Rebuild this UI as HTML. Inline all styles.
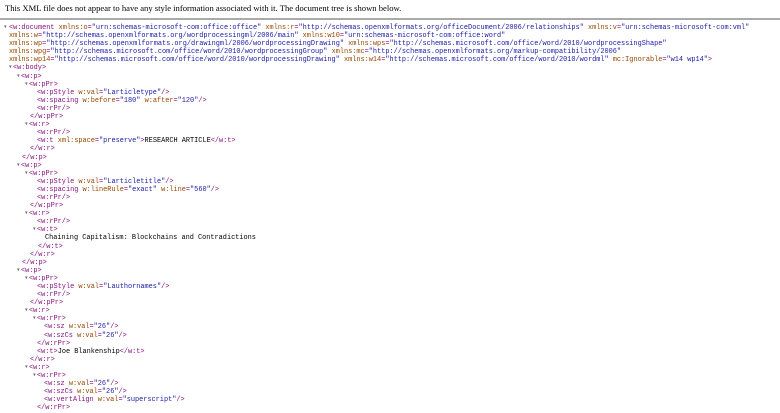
<!DOCTYPE html>
<html><head><meta charset="utf-8"><style>
html,body{margin:0;padding:0;background:#fff;width:780px;height:404px;overflow:hidden}
.hdr{position:absolute;left:5px;top:3px;font-family:"Liberation Serif",serif;font-size:8.6px;color:#000;white-space:nowrap}
.bar{position:absolute;left:0;top:18px;width:780px;height:2px;background:#aaa}
#t{position:absolute;left:0;top:24px;font-family:"Liberation Mono",monospace;font-size:6.9px;line-height:8.1px;color:#000}
.l{position:relative;height:8.1px;white-space:pre}
.t{color:#881280}.a{color:#994500}.v{color:#1a1aa6}
.ar{position:absolute;font-size:4.5px;color:#6e6e6e;top:0}
</style></head><body>
<div class="hdr">This XML file does not appear to have any style information associated with it. The document tree is shown below.</div>
<div class="bar"></div>
<div id="t"><div class="l" style="padding-left:9px"><span class="ar" style="left:4px">▼</span><span class="t">&lt;w:document</span> <span class="a">xmlns:o</span><span class="t">=</span><span class="v">"urn:schemas-microsoft-com:office:office"</span> <span class="a">xmlns:r</span><span class="t">=</span><span class="v">"http://schemas.openxmlformats.org/officeDocument/2006/relationships"</span> <span class="a">xmlns:v</span><span class="t">=</span><span class="v">"urn:schemas-microsoft-com:vml"</span></div><div class="l" style="padding-left:9px"><span class="a">xmlns:w</span><span class="t">=</span><span class="v">"http://schemas.openxmlformats.org/wordprocessingml/2006/main"</span> <span class="a">xmlns:w10</span><span class="t">=</span><span class="v">"urn:schemas-microsoft-com:office:word"</span></div><div class="l" style="padding-left:9px"><span class="a">xmlns:wp</span><span class="t">=</span><span class="v">"http://schemas.openxmlformats.org/drawingml/2006/wordprocessingDrawing"</span> <span class="a">xmlns:wps</span><span class="t">=</span><span class="v">"http://schemas.microsoft.com/office/word/2010/wordprocessingShape"</span></div><div class="l" style="padding-left:9px"><span class="a">xmlns:wpg</span><span class="t">=</span><span class="v">"http://schemas.microsoft.com/office/word/2010/wordprocessingGroup"</span> <span class="a">xmlns:mc</span><span class="t">=</span><span class="v">"http://schemas.openxmlformats.org/markup-compatibility/2006"</span></div><div class="l" style="padding-left:9px"><span class="a">xmlns:wp14</span><span class="t">=</span><span class="v">"http://schemas.microsoft.com/office/word/2010/wordprocessingDrawing"</span> <span class="a">xmlns:w14</span><span class="t">=</span><span class="v">"http://schemas.microsoft.com/office/word/2010/wordml"</span> <span class="a">mc:Ignorable</span><span class="t">=</span><span class="v">"w14 wp14"</span><span class="t">&gt;</span></div><div class="l" style="padding-left:13px"><span class="ar" style="left:9px">▼</span><span class="t">&lt;w:body&gt;</span></div><div class="l" style="padding-left:21px"><span class="ar" style="left:17px">▼</span><span class="t">&lt;w:p&gt;</span></div><div class="l" style="padding-left:29px"><span class="ar" style="left:25px">▼</span><span class="t">&lt;w:pPr&gt;</span></div><div class="l" style="padding-left:37px"><span class="t">&lt;w:pStyle</span> <span class="a">w:val</span><span class="t">=</span><span class="v">"Larticletype"</span><span class="t">/&gt;</span></div><div class="l" style="padding-left:37px"><span class="t">&lt;w:spacing</span> <span class="a">w:before</span><span class="t">=</span><span class="v">"180"</span> <span class="a">w:after</span><span class="t">=</span><span class="v">"120"</span><span class="t">/&gt;</span></div><div class="l" style="padding-left:37px"><span class="t">&lt;w:rPr/&gt;</span></div><div class="l" style="padding-left:30px"><span class="t">&lt;/w:pPr&gt;</span></div><div class="l" style="padding-left:29px"><span class="ar" style="left:25px">▼</span><span class="t">&lt;w:r&gt;</span></div><div class="l" style="padding-left:37px"><span class="t">&lt;w:rPr/&gt;</span></div><div class="l" style="padding-left:37px"><span class="t">&lt;w:t</span> <span class="a">xml:space</span><span class="t">=</span><span class="v">"preserve"</span><span class="t">&gt;</span>RESEARCH ARTICLE<span class="t">&lt;/w:t&gt;</span></div><div class="l" style="padding-left:30px"><span class="t">&lt;/w:r&gt;</span></div><div class="l" style="padding-left:22px"><span class="t">&lt;/w:p&gt;</span></div><div class="l" style="padding-left:21px"><span class="ar" style="left:17px">▼</span><span class="t">&lt;w:p&gt;</span></div><div class="l" style="padding-left:29px"><span class="ar" style="left:25px">▼</span><span class="t">&lt;w:pPr&gt;</span></div><div class="l" style="padding-left:37px"><span class="t">&lt;w:pStyle</span> <span class="a">w:val</span><span class="t">=</span><span class="v">"Larticletitle"</span><span class="t">/&gt;</span></div><div class="l" style="padding-left:37px"><span class="t">&lt;w:spacing</span> <span class="a">w:lineRule</span><span class="t">=</span><span class="v">"exact"</span> <span class="a">w:line</span><span class="t">=</span><span class="v">"560"</span><span class="t">/&gt;</span></div><div class="l" style="padding-left:37px"><span class="t">&lt;w:rPr/&gt;</span></div><div class="l" style="padding-left:30px"><span class="t">&lt;/w:pPr&gt;</span></div><div class="l" style="padding-left:29px"><span class="ar" style="left:25px">▼</span><span class="t">&lt;w:r&gt;</span></div><div class="l" style="padding-left:37px"><span class="t">&lt;w:rPr/&gt;</span></div><div class="l" style="padding-left:37px"><span class="ar" style="left:33px">▼</span><span class="t">&lt;w:t&gt;</span></div><div class="l" style="padding-left:45px">Chaining Capitalism: Blockchains and Contradictions</div><div class="l" style="padding-left:38px"><span class="t">&lt;/w:t&gt;</span></div><div class="l" style="padding-left:30px"><span class="t">&lt;/w:r&gt;</span></div><div class="l" style="padding-left:22px"><span class="t">&lt;/w:p&gt;</span></div><div class="l" style="padding-left:21px"><span class="ar" style="left:17px">▼</span><span class="t">&lt;w:p&gt;</span></div><div class="l" style="padding-left:29px"><span class="ar" style="left:25px">▼</span><span class="t">&lt;w:pPr&gt;</span></div><div class="l" style="padding-left:37px"><span class="t">&lt;w:pStyle</span> <span class="a">w:val</span><span class="t">=</span><span class="v">"Lauthornames"</span><span class="t">/&gt;</span></div><div class="l" style="padding-left:37px"><span class="t">&lt;w:rPr/&gt;</span></div><div class="l" style="padding-left:30px"><span class="t">&lt;/w:pPr&gt;</span></div><div class="l" style="padding-left:29px"><span class="ar" style="left:25px">▼</span><span class="t">&lt;w:r&gt;</span></div><div class="l" style="padding-left:37px"><span class="ar" style="left:33px">▼</span><span class="t">&lt;w:rPr&gt;</span></div><div class="l" style="padding-left:44px"><span class="t">&lt;w:sz</span> <span class="a">w:val</span><span class="t">=</span><span class="v">"26"</span><span class="t">/&gt;</span></div><div class="l" style="padding-left:44px"><span class="t">&lt;w:szCs</span> <span class="a">w:val</span><span class="t">=</span><span class="v">"26"</span><span class="t">/&gt;</span></div><div class="l" style="padding-left:37px"><span class="t">&lt;/w:rPr&gt;</span></div><div class="l" style="padding-left:37px"><span class="t">&lt;w:t&gt;</span>Joe Blankenship<span class="t">&lt;/w:t&gt;</span></div><div class="l" style="padding-left:30px"><span class="t">&lt;/w:r&gt;</span></div><div class="l" style="padding-left:29px"><span class="ar" style="left:25px">▼</span><span class="t">&lt;w:r&gt;</span></div><div class="l" style="padding-left:37px"><span class="ar" style="left:33px">▼</span><span class="t">&lt;w:rPr&gt;</span></div><div class="l" style="padding-left:44px"><span class="t">&lt;w:sz</span> <span class="a">w:val</span><span class="t">=</span><span class="v">"26"</span><span class="t">/&gt;</span></div><div class="l" style="padding-left:44px"><span class="t">&lt;w:szCs</span> <span class="a">w:val</span><span class="t">=</span><span class="v">"26"</span><span class="t">/&gt;</span></div><div class="l" style="padding-left:44px"><span class="t">&lt;w:vertAlign</span> <span class="a">w:val</span><span class="t">=</span><span class="v">"superscript"</span><span class="t">/&gt;</span></div><div class="l" style="padding-left:37px"><span class="t">&lt;/w:rPr&gt;</span></div></div>
</body></html>
